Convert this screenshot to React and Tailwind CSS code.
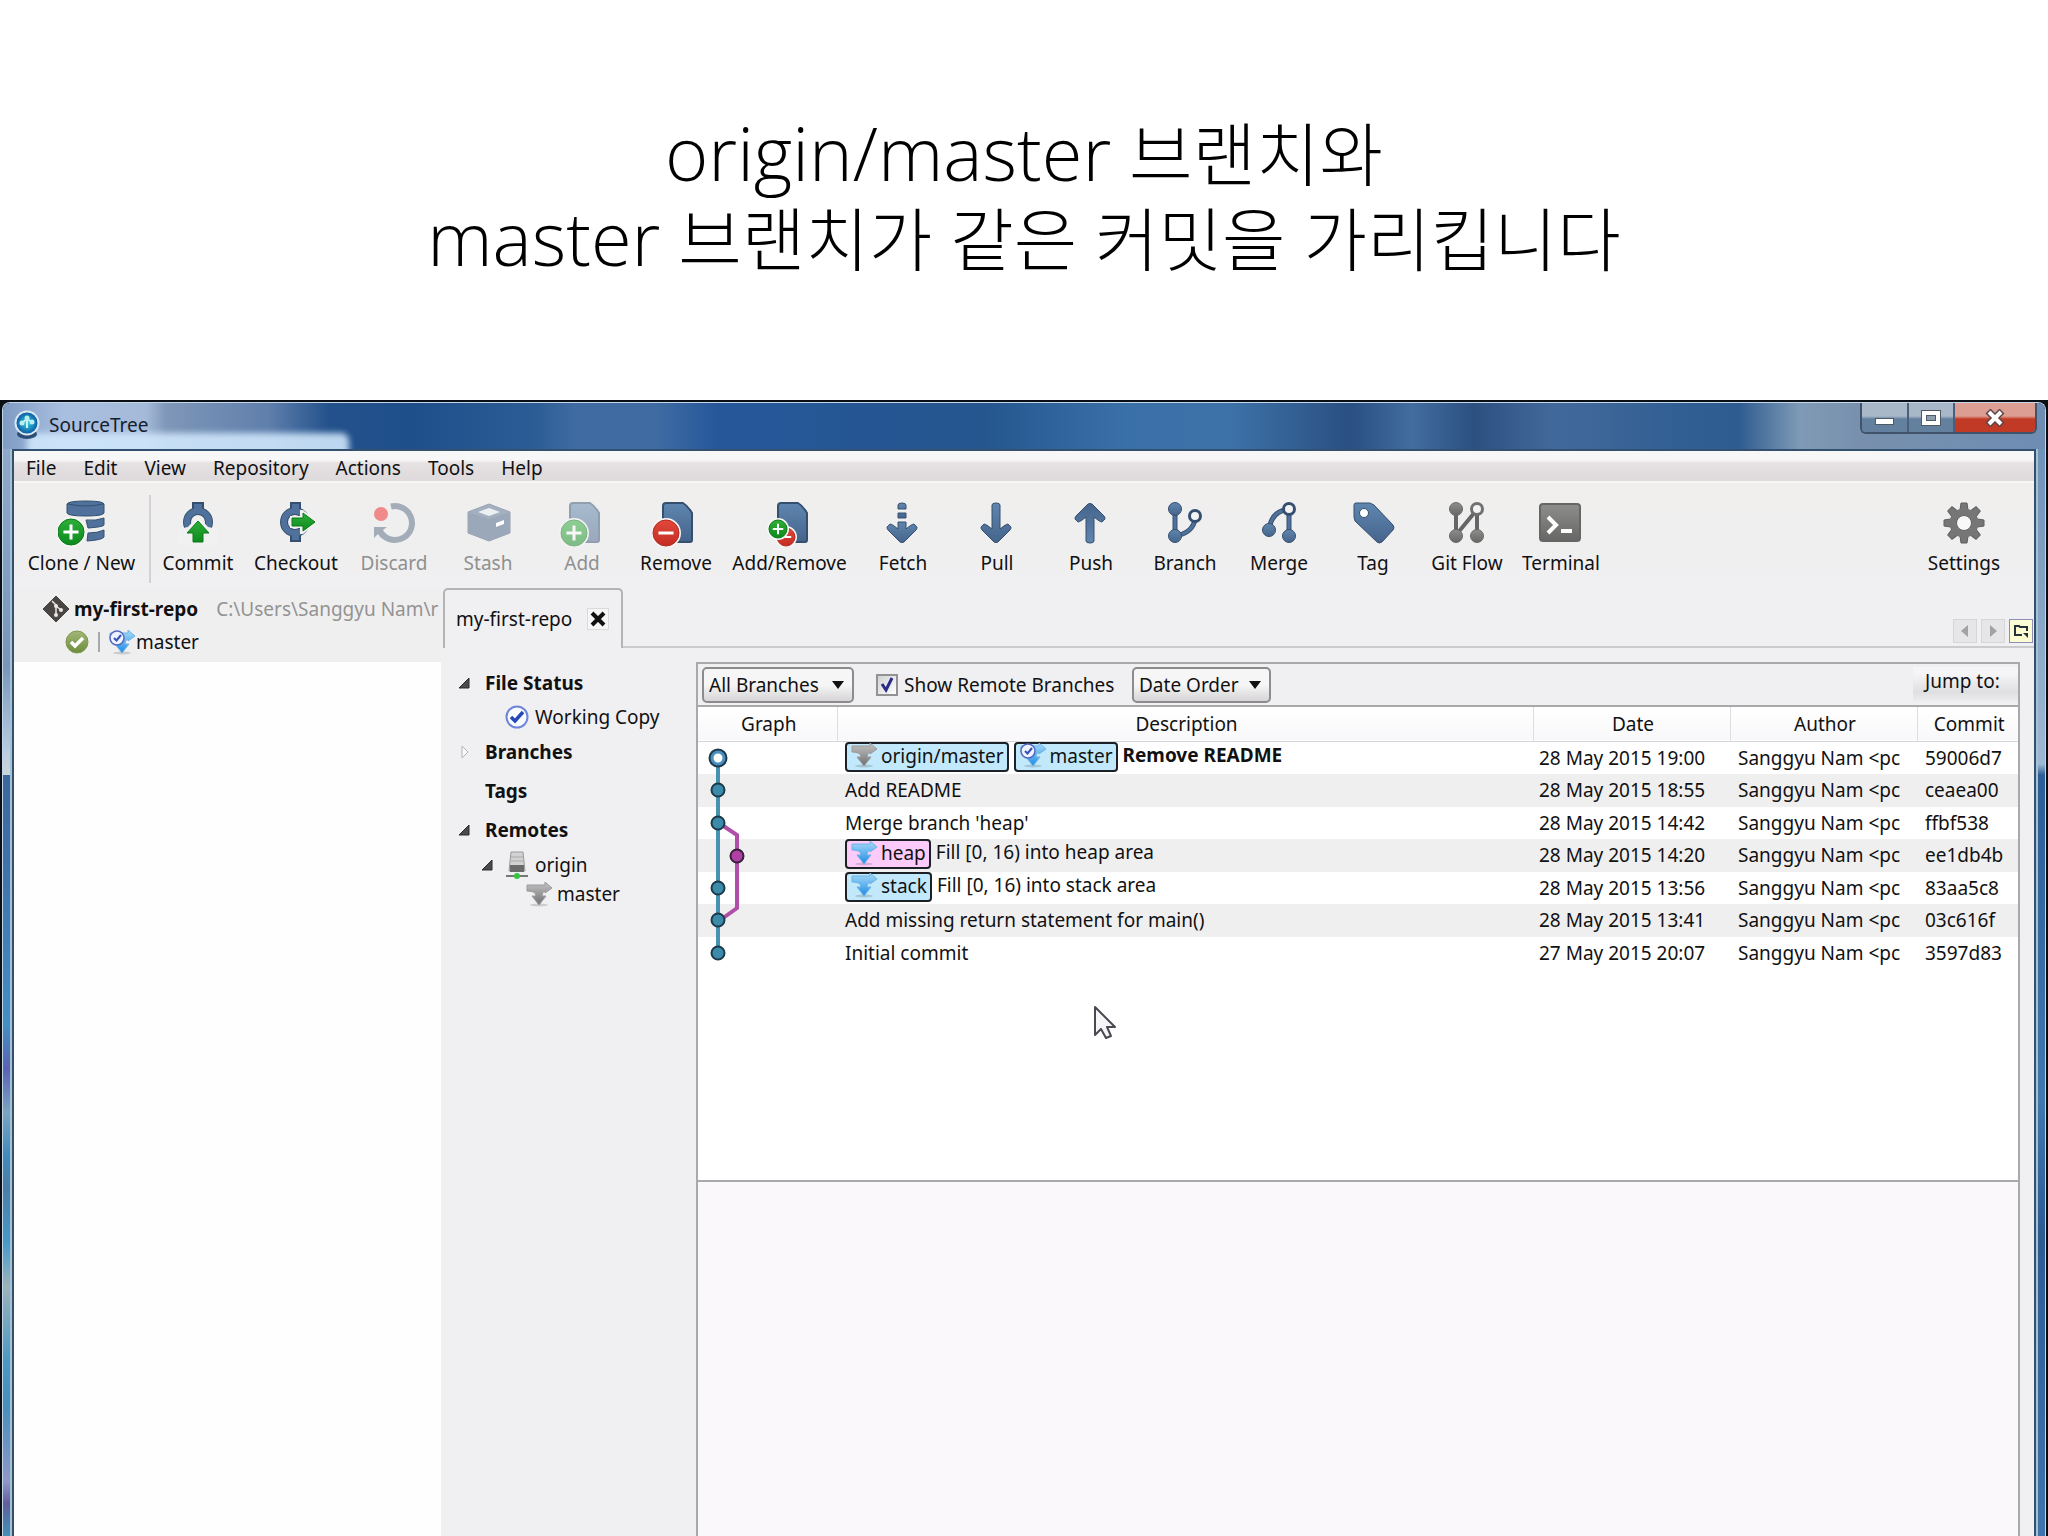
import React from "react";

const BLUE = "#4f719b";
const EDGE = "#35506f";

function Defs() {
  return (
    <svg width="0" height="0" className="absolute" aria-hidden="true">
      <defs>
        <linearGradient id="steel" x1="0" y1="0" x2="0" y2="1">
          <stop offset="0" stopColor="#5f86af" />
          <stop offset="1" stopColor="#45648c" />
        </linearGradient>
        <linearGradient id="grey" x1="0" y1="0" x2="0" y2="1">
          <stop offset="0" stopColor="#8e8e8c" />
          <stop offset="1" stopColor="#666664" />
        </linearGradient>
        <linearGradient id="green" x1="0" y1="0" x2="0" y2="1">
          <stop offset="0" stopColor="#2fae3a" />
          <stop offset="1" stopColor="#0c8a1c" />
        </linearGradient>
        <linearGradient id="red" x1="0" y1="0" x2="0" y2="1">
          <stop offset="0" stopColor="#e2483c" />
          <stop offset="1" stopColor="#c42c22" />
        </linearGradient>
        <linearGradient id="sky" x1="0" y1="0" x2="0" y2="1">
          <stop offset="0" stopColor="#a9dcf7" />
          <stop offset="1" stopColor="#1e8be6" />
        </linearGradient>
        <linearGradient id="silver" x1="0" y1="0" x2="0" y2="1">
          <stop offset="0" stopColor="#c4c4c4" />
          <stop offset="1" stopColor="#707070" />
        </linearGradient>
        <radialGradient id="orb">
          <stop offset="0" stopColor="#3fd0e0" />
          <stop offset="1" stopColor="#0a5fa6" />
        </radialGradient>
        <linearGradient id="moss" x1="0" y1="0" x2="0" y2="1">
          <stop offset="0" stopColor="#a3b878" />
          <stop offset="1" stopColor="#6d8c3c" />
        </linearGradient>
      </defs>
    </svg>
  );
}

function Icon({ children }) {
  return (
    <svg viewBox="0 0 48 48" className="h-12 w-12" aria-hidden="true">
      {children}
    </svg>
  );
}

function Badge({ x, y, r, kind }) {
  const a = r * 0.58;
  return (
    <g>
      <circle cx={x} cy={y} r={r + 2} fill="#f6f6f6" />
      <circle cx={x} cy={y} r={r} fill={kind === "plus" ? "url(#green)" : "url(#red)"} stroke={kind === "plus" ? "#0a7a18" : "#b52a20"} />
      <path
        d={kind === "plus" ? `M${x - a} ${y}H${x + a}M${x} ${y - a}V${y + a}` : `M${x - a} ${y}H${x + a}`}
        stroke="#fff"
        strokeWidth={r > 10 ? 3 : 2}
      />
    </g>
  );
}

const Doc = ({ x }) => (
  <path
    d={`M${x + 4} 4H${x + 21}Q${x + 26} 7 ${x + 30} 14V41Q${x + 30} 43 ${x + 28} 43H${x + 4}Q${x + 1} 43 ${x + 1} 40V7Q${x + 1} 4 ${x + 4} 4Z`}
    fill="url(#steel)"
    stroke={EDGE}
    strokeWidth="2"
  />
);

const CloneIcon = () => (
  <Icon>
    <path d="M9 5Q10 2 28 2Q45 2 46 5V14Q45 17 28 17Q10 17 9 14Z" fill={BLUE} stroke={EDGE} />
    <path d="M10 5Q28 9 45 5" fill="none" stroke={EDGE} />
    <path d="M28 21Q38 22 46 19V26Q45 28 30 29Z" fill={BLUE} stroke={EDGE} />
    <path d="M30 34Q40 34 46 31V38Q44 41 29 42Z" fill={BLUE} stroke={EDGE} />
    <Badge x={13} y={33} r={13} kind="plus" />
  </Icon>
);
const CommitIcon = () => (
  <Icon>
    <path d="M19 13V4H29V13" fill={BLUE} stroke={EDGE} strokeWidth="2" />
    <circle cx="24" cy="23" r="11" fill="none" stroke={EDGE} strokeWidth="8" />
    <circle cx="24" cy="23" r="11" fill="none" stroke={BLUE} strokeWidth="6" />
    <path d="M20 5H28V13H20Z" fill={BLUE} />
    <path d="M4 30L14 28L24 17L34 28L44 30V46H4Z" fill="#f1f1f1" />
    <path d="M24 22L35 34H29V43H19V34H13Z" fill="url(#green)" stroke="#0a7a18" strokeLinejoin="round" />
  </Icon>
);
const CheckoutIcon = () => (
  <Icon>
    <path d="M19 13V4H28V13M19 33V42H28V33" fill={BLUE} stroke={EDGE} strokeWidth="2" />
    <circle cx="23" cy="23" r="11" fill="none" stroke={EDGE} strokeWidth="8" />
    <circle cx="23" cy="23" r="11" fill="none" stroke={BLUE} strokeWidth="6" />
    <path d="M20 5H27V13H20ZM20 33H27V41H20Z" fill={BLUE} />
    <path d="M18 17H28V11H31L46 23L31 35H28V29H18Z" fill="#f1f1f1" />
    <path d="M20 19H31V14L43 23L31 32V27H20Z" fill="url(#green)" stroke="#0a7a18" strokeLinejoin="round" />
  </Icon>
);
const DiscardIcon = () => (
  <Icon>
    <path d="M21 7.5A17 17 0 1 1 12 35" fill="none" stroke="#a3adb9" strokeWidth="6" />
    <path d="M4 28H17L13 31L16 36L11 39L8 35L4 39Z" fill="#a3adb9" />
    <circle cx="11" cy="15" r="7" fill="#f08a8a" />
  </Icon>
);
const StashIcon = () => (
  <Icon>
    <path d="M4 13L25 5L46 13V34L25 42L4 34Z" fill="#a4b0c0" stroke="#98a4b4" strokeLinejoin="round" />
    <path d="M4 13L25 20L46 13V34L25 42L4 34Z" fill="#9ba8ba" />
    <path d="M14 13L25 9L36 13L25 17Z" fill="#edf0f2" />
    <path d="M32 24L40 21V25L32 28Z" fill="#fff" />
  </Icon>
);
const AddIcon = () => (
  <Icon>
    <g opacity="0.5">
      <Doc x={11} />
      <Badge x={16} y={34} r={13} kind="plus" />
    </g>
  </Icon>
);
const RemoveIcon = () => (
  <Icon>
    <Doc x={10} />
    <Badge x={14} y={34} r={13} kind="minus" />
  </Icon>
);
const AddRemoveIcon = () => (
  <Icon>
    <Doc x={11} />
    <Badge x={20} y={38} r={9} kind="minus" />
    <Badge x={12} y={30} r={9} kind="plus" />
  </Icon>
);
const FetchIcon = () => (
  <Icon>
    <g fill="url(#steel)" stroke={EDGE} strokeWidth="1">
      <path d="M19 10V6Q19 4 23 4Q27 4 27 6V10ZM19 14H27V19H19Z" />
      <path d="M8 28L11 25Q13 25 19 30V23H27V30Q33 25 35 25L38 28Q38 30 37 31L25 43Q23 44 21 43L9 31Q8 30 8 28Z" />
    </g>
  </Icon>
);
const PULL = "M19 30V6Q19 4 23 4Q27 4 27 6V30Q33 25 35 25L38 28Q38 30 37 31L25 43Q23 44 21 43L9 31Q8 30 8 28L11 25Q13 25 19 30Z";
const PullIcon = () => (
  <Icon>
    <path d={PULL} fill="url(#steel)" stroke={EDGE} />
  </Icon>
);
const PushIcon = () => (
  <Icon>
    <path d={PULL} fill="url(#steel)" stroke={EDGE} transform="matrix(1 0 0 -1 0 48)" />
  </Icon>
);
const BranchIcon = () => (
  <Icon>
    <path d="M14 10V37M14 37Q32 34 34 20" fill="none" stroke={EDGE} strokeWidth="5" />
    <path d="M14 10V37M14 37Q32 34 34 20" fill="none" stroke={BLUE} strokeWidth="3" />
    <g fill="url(#steel)" stroke={EDGE}>
      <circle cx="14" cy="10" r="6.5" />
      <circle cx="14" cy="37" r="6.5" />
    </g>
    <circle cx="34" cy="17" r="5.5" fill="#f3f3f3" stroke={EDGE} strokeWidth="3" />
  </Icon>
);
const MergeIcon = () => (
  <Icon>
    <path d="M34 10V37M14 31Q16 14 30 11" fill="none" stroke={EDGE} strokeWidth="5" />
    <path d="M34 10V37M14 31Q16 14 30 11" fill="none" stroke={BLUE} strokeWidth="3" />
    <g fill="url(#steel)" stroke={EDGE}>
      <circle cx="14" cy="31" r="6.5" />
      <circle cx="34" cy="37" r="6.5" />
    </g>
    <circle cx="34" cy="10" r="5.5" fill="#f3f3f3" stroke={EDGE} strokeWidth="3" />
  </Icon>
);
const TagIcon = () => (
  <Icon>
    <path d="M7 4H21L25 6L44 26Q46 29 44 31L33 43Q30 45 28 43L6 22L5 18V6Q5 4 7 4Z" fill="url(#steel)" stroke={EDGE} />
    <circle cx="15" cy="14" r="4.5" fill="#fff" stroke={EDGE} />
  </Icon>
);
const GitFlowIcon = () => (
  <Icon>
    <path d="M13 10V37M34 10V37M13 36L32 13" fill="none" stroke="#666" strokeWidth="4" />
    <g fill="url(#grey)" stroke="#6a6a68">
      <circle cx="13" cy="10" r="6.5" />
      <circle cx="13" cy="37" r="6.5" />
      <circle cx="34" cy="37" r="6.5" />
    </g>
    <circle cx="34" cy="10" r="5.5" fill="#f3f3f3" stroke="#707070" strokeWidth="3" />
  </Icon>
);
const TerminalIcon = () => (
  <Icon>
    <rect x="3" y="5" width="40" height="37" rx="3" fill="url(#grey)" stroke="#666" strokeWidth="2" />
    <path d="M11 18L19 26L11 34" fill="none" stroke="#fff" strokeWidth="4" />
    <path d="M24 32H35" stroke="#fff" strokeWidth="4" />
  </Icon>
);
const SettingsIcon = () => (
  <Icon>
    <g fill="#767676" stroke="#5e5e5e" strokeWidth="1">
      {[0, 45, 90, 135, 180, 225, 270, 315].map((a) => (
        <path key={a} d="M19.5 14L21 4H27L28.5 14Z" transform={`rotate(${a} 24 24)`} />
      ))}
    </g>
    <circle cx="24" cy="24" r="11" fill="none" stroke="#767676" strokeWidth="7" />
    <circle cx="24" cy="24" r="7.5" fill="#f8f8f8" stroke="#5e5e5e" strokeWidth="1" />
  </Icon>
);

const BRANCH_SHAPE = "M1 3H19V0L26 6L19 11V9Q16 10 16 14H20L13 23L6 14H10Q10 9 1 9Z";

function RefIcon({ tone = "sky" }) {
  return (
    <svg viewBox="0 0 27 25" className="h-[25px] w-[27px] shrink-0" aria-hidden="true">
      <ellipse cx="13" cy="23" rx="9" ry="1.5" fill="#000" opacity="0.15" />
      <path d={BRANCH_SHAPE} fill={tone === "sky" ? "url(#sky)" : "url(#silver)"} stroke={tone === "sky" ? "#6db4e4" : "#9a9a9a"} />
    </svg>
  );
}
function CurrentRefIcon() {
  return (
    <svg viewBox="0 0 27 25" className="h-[25px] w-[27px] shrink-0" aria-hidden="true">
      <ellipse cx="13" cy="23" rx="9" ry="1.5" fill="#000" opacity="0.15" />
      <path d={BRANCH_SHAPE} fill="url(#sky)" stroke="#6db4e4" />
      <circle cx="8" cy="8" r="7" fill="#eef4ff" stroke="#5468c0" strokeWidth="1.5" />
      <path d="M5 8L7.500 10.500L12 5" fill="none" stroke="#3850b4" strokeWidth="2" />
    </svg>
  );
}

const TOOLS = [
  ["Commit", CommitIcon, "w-[94px]"],
  ["Checkout", CheckoutIcon, "w-[102px]"],
  ["Discard", DiscardIcon, "w-[94px]", true],
  ["Stash", StashIcon, "w-[94px]", true],
  ["Add", AddIcon, "w-[94px]", true],
  ["Remove", RemoveIcon, "w-[94px]"],
  ["Add/Remove", AddRemoveIcon, "w-[133px]"],
  ["Fetch", FetchIcon, "w-[94px]"],
  ["Pull", PullIcon, "w-[94px]"],
  ["Push", PushIcon, "w-[94px]"],
  ["Branch", BranchIcon, "w-[94px]"],
  ["Merge", MergeIcon, "w-[94px]"],
  ["Tag", TagIcon, "w-[94px]"],
  ["Git Flow", GitFlowIcon, "w-[94px]"],
  ["Terminal", TerminalIcon, "w-[94px]"],
];

function Tool({ label, icon: Glyph, width, disabled }) {
  return (
    <button
      type="button"
      disabled={disabled}
      className={`flex shrink-0 flex-col items-center gap-1 whitespace-nowrap disabled:text-[#8f8f8f] ${width}`}
    >
      <Glyph />
      <span>{label}</span>
    </button>
  );
}

const COMMITS = [
  { refs: [["origin/master", "silver"], ["master", "current"]], text: "Remove README", bold: true, date: "28 May 2015 19:00", id: "59006d7" },
  { text: "Add README", date: "28 May 2015 18:55", id: "ceaea00" },
  { text: "Merge branch 'heap'", date: "28 May 2015 14:42", id: "ffbf538" },
  { refs: [["heap", "sky", true]], text: "Fill [0, 16) into heap area", date: "28 May 2015 14:20", id: "ee1db4b" },
  { refs: [["stack", "sky"]], text: "Fill [0, 16) into stack area", date: "28 May 2015 13:56", id: "83aa5c8" },
  { text: "Add missing return statement for main()", date: "28 May 2015 13:41", id: "03c616f" },
  { text: "Initial commit", date: "27 May 2015 20:07", id: "3597d83" },
];

function RefTag({ name, kind, pink }) {
  return (
    <span
      className={`flex h-[30px] items-center gap-[3px] rounded-[4px] border-2 border-[#1b2126] pr-[3px] pl-1 pb-[2px] leading-6 ${pink ? "bg-[#fccbfa]" : "bg-[#c2e8fb]"}`}
    >
      {kind === "current" ? <CurrentRefIcon /> : <RefIcon tone={kind} />}
      {name}
    </span>
  );
}

function Graph() {
  const ys = [17, 49, 82, 147, 179, 212];
  return (
    <svg viewBox="0 0 60 240" className="pointer-events-none absolute top-[34px] left-px h-[240px] w-[60px]" aria-hidden="true">
      <path d="M19 17V212" stroke="#4792ae" strokeWidth="4" />
      <path d="M20 82L38 94V167L20 180" fill="none" stroke="#b04fa8" strokeWidth="4" />
      <circle cx="38" cy="115" r="6.500" fill="#b03fa6" stroke="#33223a" strokeWidth="2" />
      {ys.slice(1).map((y) => (
        <circle key={y} cx="19" cy={y} r="6.500" fill="#3d8bab" stroke="#1c3b4a" strokeWidth="2" />
      ))}
      <circle cx="19" cy="17" r="8" fill="#fff" stroke="#1c3b4a" strokeWidth="3" />
      <circle cx="19" cy="17" r="6" fill="#fff" stroke="#4b8fc0" strokeWidth="3" />
    </svg>
  );
}

function Expander({ open }) {
  return (
    <svg viewBox="0 0 12 12" className="h-3 w-3 overflow-visible" aria-hidden="true">
      {open ? <path d="M11 1V11H1Z" fill="#4a4a4a" stroke="#2c2c2c" /> : <path d="M4 0V12L10 6Z" fill="#f8f8f8" stroke="#b4b4b4" />}
    </svg>
  );
}

function Select({ id, label, options, width }) {
  return (
    <div className={`relative ${width}`}>
      <select
        id={id}
        aria-label={label}
        className="h-9 w-full appearance-none rounded-[5px] border-2 border-[#8c8c8c] bg-linear-to-b from-[#f6f6f6] from-50% to-[#d6d4d6] to-100% pl-[5px] leading-6"
      >
        {options.map((o) => (
          <option key={o}>{o}</option>
        ))}
      </select>
      <svg viewBox="0 0 12 8" className="pointer-events-none absolute top-[14px] right-[10px] h-2 w-3" aria-hidden="true">
        <path d="M0 0H12L6 8Z" fill="#111" />
      </svg>
    </div>
  );
}

function CommitPane() {
  return (
    <section className="mr-[14px] flex min-w-0 flex-1 flex-col border-t-2 border-r-2 border-l-2 border-[#a9a8aa] bg-white">
      <div className="flex h-[43px] items-center border-b-2 border-[#a9a8aa] bg-[#f0eff1]">
        <div className="flex flex-1 items-center pl-1">
          <Select id="scope" label="Branches shown" options={["All Branches", "Current Branch"]} width="w-[152px]" />
          <span className="relative ml-[22px] flex h-[22px] w-[22px]">
            <input
              id="remote"
              type="checkbox"
              defaultChecked
              className="peer h-full w-full appearance-none border-2 border-[#929294] bg-linear-to-br from-[#d2d2d6] to-white"
            />
            <svg viewBox="0 0 22 22" className="pointer-events-none absolute inset-0 hidden peer-checked:block" aria-hidden="true">
              <path d="M6 10L10 16L16 4" fill="none" stroke="#2b2b86" strokeWidth="3" />
            </svg>
          </span>
          <label htmlFor="remote" className="ml-[6px] w-[228px] whitespace-nowrap">
            Show Remote Branches
          </label>
          <Select id="order" label="Sort order" options={["Date Order", "Ancestor Order"]} width="w-[139px]" />
        </div>
        <button type="button" className="h-9 w-[105px] bg-linear-to-b from-[#f5f4f6] from-20% via-[#dfdee0] via-70% to-[#f0eff1] pb-2 pl-3 text-left">
          Jump to:
        </button>
      </div>
      <div className="relative min-h-[473px]">
        <table className="w-full table-fixed border-collapse">
          <colgroup>
            <col className="w-[139px]" />
            <col />
            <col className="w-[197px]" />
            <col className="w-[187px]" />
            <col className="w-[101px]" />
          </colgroup>
          <thead>
            <tr className="h-[34px] border-b border-[#d4d4d6] bg-linear-to-b from-white to-[#f8f8fa]">
              {["Graph", "Description", "Date", "Author", "Commit"].map((h) => (
                <th key={h} className="border-r border-[#dedee2] p-0 pl-[3px] font-normal last:border-r-0">
                  {h}
                </th>
              ))}
            </tr>
          </thead>
          <tbody>
            {COMMITS.map((c) => (
              <tr key={c.id} className="h-8 whitespace-nowrap even:h-[33px] even:bg-[#f0eff0]">
                <td className="p-0" />
                <td className="p-0 pl-2">
                  {c.refs ? (
                    <div className="flex h-8 items-start gap-[5px]">
                      {c.refs.map(([name, kind, pink]) => (
                        <RefTag key={name} name={name} kind={kind} pink={pink} />
                      ))}
                      <span className={c.bold ? "leading-[26px] font-bold" : "leading-[26px]"}>{c.text}</span>
                    </div>
                  ) : (
                    c.text
                  )}
                </td>
                <td className="p-0 pl-[6px]">{c.date}</td>
                <td className="p-0 pl-2">Sanggyu Nam &lt;pc</td>
                <td className="p-0 pl-2">{c.id}</td>
              </tr>
            ))}
          </tbody>
        </table>
        <Graph />
        <svg viewBox="0 0 24 36" className="absolute top-[298px] left-[395px] h-9 w-6" aria-hidden="true">
          <path d="M2 2V30L8 24L13 33L18 31L14 22H22Z" fill="#f6f6f8" stroke="#4a4850" strokeWidth="2" strokeLinejoin="round" />
        </svg>
      </div>
      <div className="flex-1 border-t-2 border-[#a9a8aa] bg-[#faf8fb]" />
    </section>
  );
}

function Sidebar() {
  return (
    <nav className="w-[255px] shrink-0 pt-1 whitespace-nowrap">
      <div className="flex h-[34px] items-center gap-[15px] pl-[17px] font-bold">
        <Expander open />
        File Status
      </div>
      <div className="flex h-[34px] items-center gap-[6px] pl-16">
        <svg viewBox="0 0 24 24" className="h-6 w-6" aria-hidden="true">
          <circle cx="12" cy="12" r="10.500" fill="#fafcff" stroke="#6d86dc" strokeWidth="2" />
          <path d="M6 12L10 16L18 7" fill="none" stroke="#2748bb" strokeWidth="3.500" />
        </svg>
        Working Copy
      </div>
      <div className="flex h-9 items-center gap-[15px] pl-[17px] font-bold">
        <Expander />
        Branches
      </div>
      <div className="flex h-[42px] items-center pl-11 font-bold">Tags</div>
      <div className="flex h-9 items-center gap-[15px] pl-[17px] font-bold">
        <Expander open />
        Remotes
      </div>
      <div className="flex h-[33px] items-center pl-10">
        <Expander open />
        <svg viewBox="0 0 24 28" className="mr-[6px] ml-3 h-7 w-6" aria-hidden="true">
          <path d="M6 1H18L20 20H4Z" fill="#d2d2d2" stroke="#9a9a9a" />
          <path d="M6 6H18M6 10H18" stroke="#aaa" />
          <path d="M5 14H19V21H5Z" fill="#6a6a6a" />
          <path d="M1 25H23" stroke="#777" strokeWidth="2" />
          <circle cx="12" cy="25" r="3" fill="#36c43c" />
        </svg>
        origin
      </div>
      <div className="flex h-[26px] items-center gap-1 pl-[85px]">
        <RefIcon tone="silver" />
        master
      </div>
    </nav>
  );
}

function RepoList() {
  return (
    <aside className="flex w-[427px] shrink-0 flex-col overflow-hidden bg-[#fefefe] whitespace-nowrap">
      <div className="h-[74px] bg-[#f0eff0] pt-1">
        <div className="flex h-[34px] items-center pl-7">
          <svg viewBox="0 0 28 28" className="h-7 w-7 shrink-0" aria-hidden="true">
            <path d="M14 1L27 14L14 27L1 14Z" fill="#4a4643" strokeLinejoin="round" stroke="#4a4643" />
            <path d="M10 6L14 10V20M14 11L19 15" fill="none" stroke="#e8e8e8" strokeWidth="1.500" />
            <circle cx="14" cy="20" r="2" fill="#e8e8e8" />
            <circle cx="14" cy="11" r="2" fill="#e8e8e8" />
            <circle cx="19" cy="15" r="2" fill="#e8e8e8" />
          </svg>
          <strong className="ml-1">my-first-repo</strong>
          <span className="ml-[18px] text-[#939393]">C:\Users\Sanggyu Nam\r</span>
        </div>
        <div className="flex h-8 items-center pl-[51px]">
          <svg viewBox="0 0 24 24" className="h-6 w-6" aria-hidden="true">
            <circle cx="12" cy="12" r="11" fill="url(#moss)" stroke="#7f9a52" />
            <path d="M6 12L10 16L18 8" fill="none" stroke="#fff" strokeWidth="3.500" />
          </svg>
          <span className="mx-[9px] h-5 w-[2px] bg-[#a8a8a8]" />
          <CurrentRefIcon />
          master
        </div>
      </div>
    </aside>
  );
}

function NavButton({ label, children, lit }) {
  return (
    <button
      type="button"
      aria-label={label}
      className={`flex h-6 w-6 items-center justify-center border ${lit ? "border-[#8d8db8] bg-[#fbfbd4]" : "border-[#d6d5d7] bg-[#e6e5e7]"}`}
    >
      <svg viewBox="0 0 16 16" className="h-4 w-4" aria-hidden="true">
        {children}
      </svg>
    </button>
  );
}

function Workspace() {
  return (
    <div className="flex min-w-0 flex-1 flex-col">
      <div className="flex h-[60px] items-stretch">
        <div className="ml-[2px] flex w-[180px] items-center justify-between rounded-t-[5px] border-t-2 border-r-2 border-l-2 border-[#b4b3b5] pr-3 pl-[11px] whitespace-nowrap">
          my-first-repo
          <button type="button" aria-label="Close tab" className="flex h-[22px] w-[22px] items-center justify-center border border-[#dad9db] bg-[#f6f6f6]">
            <svg viewBox="0 0 16 16" className="h-4 w-4" aria-hidden="true">
              <path d="M2 2L14 14M14 2L2 14" stroke="#111" strokeWidth="4" />
            </svg>
          </button>
        </div>
        <div className="flex flex-1 items-end justify-end gap-1 border-b-2 border-[#cbcacc] pr-px pb-[3px]">
          <NavButton label="Previous tab">
            <path d="M11 2V14L4 8Z" fill="#a2a2a2" />
          </NavButton>
          <NavButton label="Next tab">
            <path d="M5 2V14L12 8Z" fill="#a2a2a2" />
          </NavButton>
          <NavButton label="Tab list" lit>
            <path d="M9 12H2V3H6L7 4H14V8" fill="none" stroke="#26303a" strokeWidth="2" />
            <path d="M10 10H15V15Z" fill="#26303a" />
          </NavButton>
        </div>
      </div>
      <div className="flex flex-1 pt-[14px]">
        <Sidebar />
        <CommitPane />
      </div>
    </div>
  );
}

function TitleBar() {
  return (
    <header className="relative flex h-[46px] items-start justify-between overflow-hidden bg-[linear-gradient(90deg,#7f9cc4_0%,#a9bfe0_3%,#a5bad8_7%,#7f97b8_8%,#5f7fac_13%,#23518b_16%,#1f4f8b_20%,#2c5c94_26%,#3f6ba2_28%,#3f6ba2_32%,#26579a_35%,#25568e_48%,#3a70a8_55%,#3d72a8_60%,#2a4f82_66%,#426d9f_69%,#2c5080_72%,#43699b_76%,#315f94_82%,#2e5c90_85%,#7f9ab6_88%,#7890ad_91%,#6d8db3_100%)]">
      <div className="absolute -bottom-3 left-6 h-7 w-[322px] rounded-lg bg-[#cfe6fb] opacity-90 blur-[3px]" />
      <h2 className="relative flex items-center gap-2 pt-[7px] pl-[10px] text-[#15202c]">
        <svg viewBox="0 0 28 30" className="h-[30px] w-7" aria-hidden="true">
          <ellipse cx="14" cy="24" rx="10" ry="5" fill="#2c4d74" />
          <circle cx="14" cy="13" r="12.500" fill="#dbe8f4" />
          <circle cx="14" cy="13" r="10.500" fill="url(#orb)" />
          <path d="M9 13L14 9L19 12M14 9V18" stroke="#c8f4f4" strokeWidth="2" fill="none" />
          <circle cx="9" cy="13" r="2.500" fill="#b8f0f2" />
          <circle cx="14" cy="8" r="2.500" fill="#b8f0f2" />
          <circle cx="19" cy="12" r="2.500" fill="#b8f0f2" />
        </svg>
        SourceTree
      </h2>
      <div className="relative mr-2 flex h-[31px] overflow-hidden rounded-b-md border-r-2 border-b-2 border-l-2 border-[#41536b]">
        <button type="button" aria-label="Minimize" className="flex w-[47px] items-end justify-center border-r-2 border-[#4b5f7a] bg-linear-to-b from-[#a9b8c9] from-45% to-[#64809f] to-55% pb-[7px]">
          <span className="h-[7px] w-[19px] border border-[#505a66] bg-white" />
        </button>
        <button type="button" aria-label="Maximize" className="flex w-[46px] items-center justify-center border-r-2 border-[#4b5f7a] bg-linear-to-b from-[#a9b8c9] from-45% to-[#64809f] to-55%">
          <span className="h-4 w-5 border border-[#505a66] bg-white p-1">
            <span className="block h-full w-full border border-[#505a66] bg-[#8d9cae]" />
          </span>
        </button>
        <button type="button" aria-label="Close" className="flex w-[80px] items-center justify-center bg-linear-to-b from-[#dc9d92] from-45% to-[#c13a25] to-55%">
          <svg viewBox="0 0 20 18" className="h-[18px] w-5" aria-hidden="true">
            <path d="M3 2L17 16M17 2L3 16" stroke="#5b4648" strokeWidth="7" />
            <path d="M4 3L16 15M16 3L4 15" stroke="#fff" strokeWidth="4" />
          </svg>
        </button>
      </div>
    </header>
  );
}

function Latin({ children }) {
  return <span className="text-[74px]">{children}</span>;
}

export default function App() {
  return (
    <div className="flex min-h-screen flex-col bg-white font-['Noto_Sans','Noto_Sans_CJK_KR',sans-serif] text-[19px] leading-6 text-[#111]">
      <Defs />
      <h1 className="flex h-[400px] flex-col items-center justify-center pb-2 text-center font-['Open_Sans','Noto_Sans_CJK_KR',sans-serif] text-[69px] leading-[84px] font-light text-black">
        <span>
          <Latin>origin/master</Latin> 브랜치와
        </span>
        <span>
          <Latin>master</Latin> 브랜치가 같은 커밋을 가리킵니다
        </span>
      </h1>
      <div className="flex flex-1 flex-col bg-[#0a0f16] px-[2px] pt-[2px]">
        <div className="flex flex-1 flex-col overflow-hidden rounded-t-[8px] border-t border-r border-l border-[#c4d6e8]">
          <TitleBar />
          <div className="flex flex-1">
            <div className="w-[9px] shrink-0 border-r-2 border-[#a6c2d2] bg-[linear-gradient(180deg,#8fa9cc_0%,#7896ba_20%,#b9cde4_28%,#c9d6da_30%,#3c679c_30%,#3f72ad_38%,#4290c4_53%,#5b62b4_57%,#7ba4c2_61%,#3f8cbc_65%,#4a7ea6_68%,#459acb_73%,#9bb4bc_77%,#4a98c4_84%,#4590bc_88%,#8f98c8_95%,#625e9c_97%,#3f93b8_100%)]" />
            <div className="flex min-w-0 flex-1 flex-col border-t-2 border-r-2 border-l-2 border-[#33506f] bg-[#f0eff1]">
              <div className="flex h-[30px] items-center gap-[27px] bg-linear-to-b from-[#f8f7f8] from-30% via-[#e6e2e4] via-40% to-[#dedadc] pt-1 pl-3">
                {["File", "Edit", "View", "Repository", "Actions", "Tools", "Help"].map((m) => (
                  <button key={m} type="button">
                    {m}
                  </button>
                ))}
              </div>
              <div className="flex h-[107px] items-start border-t-2 border-[#f8f7f5] bg-linear-to-b from-[#f0efee] to-[#f0eff1] pt-4">
                <Tool label="Clone / New" icon={CloneIcon} width="w-[135px]" />
                <span className="-mt-1 h-[88px] w-[2px] bg-[#d2d1d3]" />
                {TOOLS.map(([label, icon, width, disabled]) => (
                  <Tool key={label} label={label} icon={icon} width={width} disabled={disabled} />
                ))}
                <span className="flex-1" />
                <Tool label="Settings" icon={SettingsIcon} width="w-[140px]" />
              </div>
              <div className="flex flex-1">
                <RepoList />
                <Workspace />
              </div>
            </div>
            <div className="w-[9px] shrink-0 border-l-2 border-[#a6c2d2] bg-[linear-gradient(180deg,#6f92b8_0%,#9db8d4_29%,#2c5d96_30%,#3f79ae_60%,#2c5b92_72%,#3f75ac_100%)]" />
          </div>
        </div>
      </div>
    </div>
  );
}
